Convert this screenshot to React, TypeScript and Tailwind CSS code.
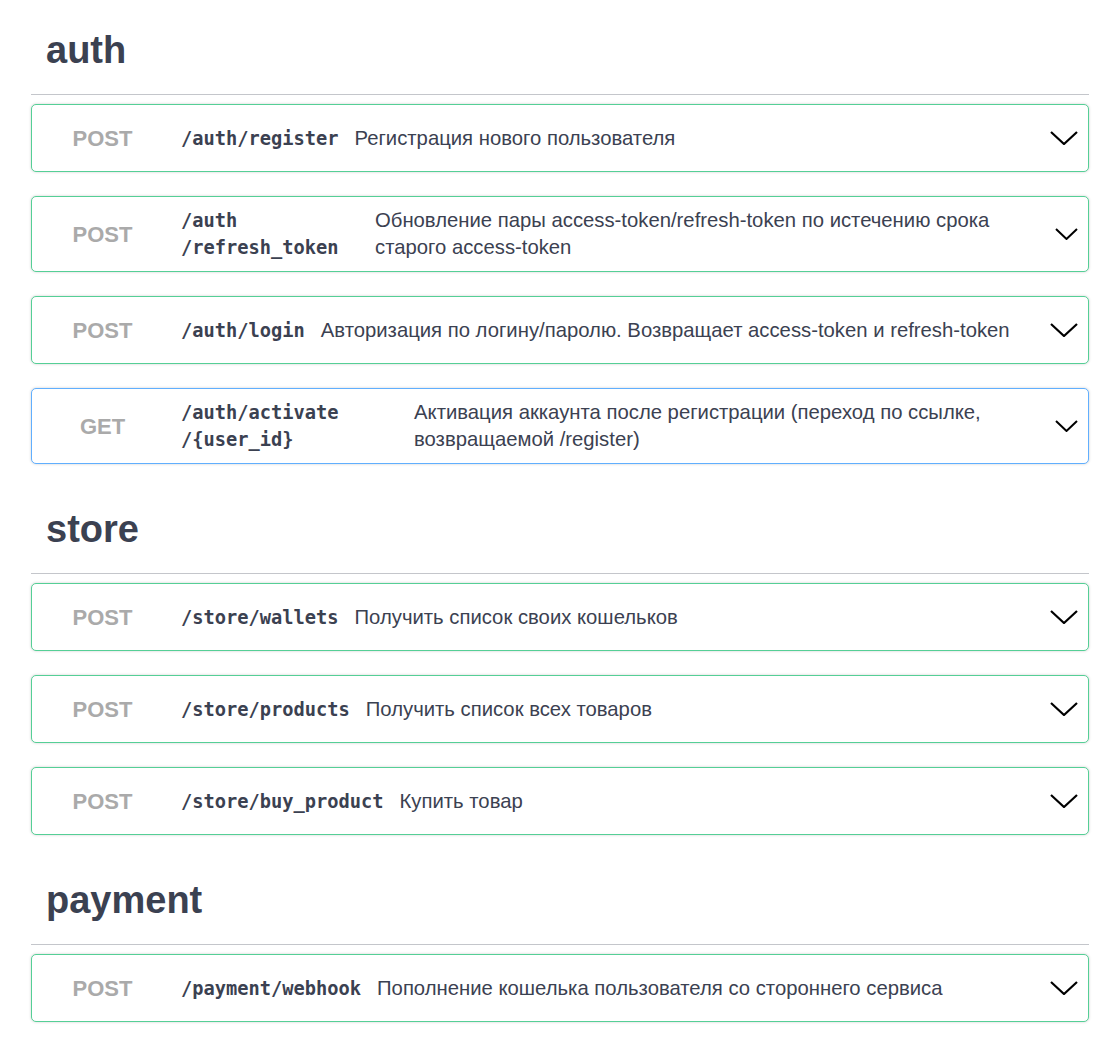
type Op = {
  method: 'POST' | 'GET';
  path: string[];
  desc: string;
  pathWidth?: string;
};

const sections: { tag: string; ops: Op[] }[] = [
  {
    tag: 'auth',
    ops: [
      { method: 'POST', path: ['/auth', '/register'], desc: 'Регистрация нового пользователя' },
      {
        method: 'POST',
        path: ['/auth', '/refresh_token'],
        desc: 'Обновление пары access-token/refresh-token по истечению срока старого access-token',
        pathWidth: 'w-[178px]',
      },
      {
        method: 'POST',
        path: ['/auth', '/login'],
        desc: 'Авторизация по логину/паролю. Возвращает access-token и refresh-token',
      },
      {
        method: 'GET',
        path: ['/auth', '/activate', '/{user_id}'],
        desc: 'Активация аккаунта после регистрации (переход по ссылке, возвращаемой /register)',
        pathWidth: 'w-[217px]',
      },
    ],
  },
  {
    tag: 'store',
    ops: [
      { method: 'POST', path: ['/store', '/wallets'], desc: 'Получить список своих кошельков' },
      { method: 'POST', path: ['/store', '/products'], desc: 'Получить список всех товаров' },
      { method: 'POST', path: ['/store', '/buy_product'], desc: 'Купить товар' },
    ],
  },
  {
    tag: 'payment',
    ops: [
      {
        method: 'POST',
        path: ['/payment', '/webhook'],
        desc: 'Пополнение кошелька пользователя со стороннего сервиса',
      },
    ],
  },
];

function Chevron({ small }: { small?: boolean }) {
  if (small) {
    return (
      <svg width="23" height="12" viewBox="0 0 23 12" className="shrink-0">
        <polyline points="1,1 11.5,11 22,1" fill="none" stroke="#000" strokeWidth="2" />
      </svg>
    );
  }
  return (
    <svg width="28" height="14" viewBox="0 0 28 14" className="shrink-0">
      <polyline points="1,1 14,13 27,1" fill="none" stroke="#000" strokeWidth="2.2" />
    </svg>
  );
}

function OpBlock({ op }: { op: Op }) {
  const isGet = op.method === 'GET';
  return (
    <div
      className={
        isGet
          ? 'flex items-center min-h-[68px] py-[10px] pr-[10px] bg-white border border-[#61affe] rounded-[5px] shadow-[0_0_3px_rgba(0,0,0,0.19)]'
          : 'flex items-center min-h-[68px] py-[10px] pr-[10px] bg-white border border-[#55cf96] rounded-[5px] shadow-[0_0_3px_rgba(0,0,0,0.19)]'
      }
    >
      <div className="w-[141px] shrink-0 text-center text-[22px] font-bold text-[#aaaaaa] font-['Liberation_Sans',Arial,sans-serif]">
        {op.method}
      </div>
      <div
        className={
          "ml-2 shrink-0 font-['DejaVu_Sans_Mono',monospace] font-bold text-[18.7px] leading-[27px] text-[#3b4151] " +
          (op.pathWidth ?? '')
        }
      >
        {op.path.map((p, i) => (
          <span key={i}>
            {i > 0 && <wbr />}
            {p}
          </span>
        ))}
      </div>
      <div className="ml-4 flex-1 text-[20.3px] leading-[27px] text-[#3b4151] font-['Liberation_Sans',Arial,sans-serif]">
        {op.desc}
      </div>
      <div className="ml-3">
        <Chevron small={!!op.pathWidth} />
      </div>
    </div>
  );
}

export default function App() {
  return (
    <div className="min-h-screen bg-white pl-[31px] pr-[28px] pt-[27px] pb-10 font-['Liberation_Sans',Arial,sans-serif]">
      <div className="flex flex-col gap-[42px]">
        {sections.map((s) => (
          <section key={s.tag}>
            <div className="pl-[15px] pb-[21px] border-b border-[#c4c6cb]">
              <h2 className="text-[38px] leading-[46px] font-bold text-[#3b4151]">{s.tag}</h2>
            </div>
            <div className="mt-[9px] flex flex-col gap-[24px]">
              {s.ops.map((op) => (
                <OpBlock key={op.path.join('')} op={op} />
              ))}
            </div>
          </section>
        ))}
      </div>
    </div>
  );
}
